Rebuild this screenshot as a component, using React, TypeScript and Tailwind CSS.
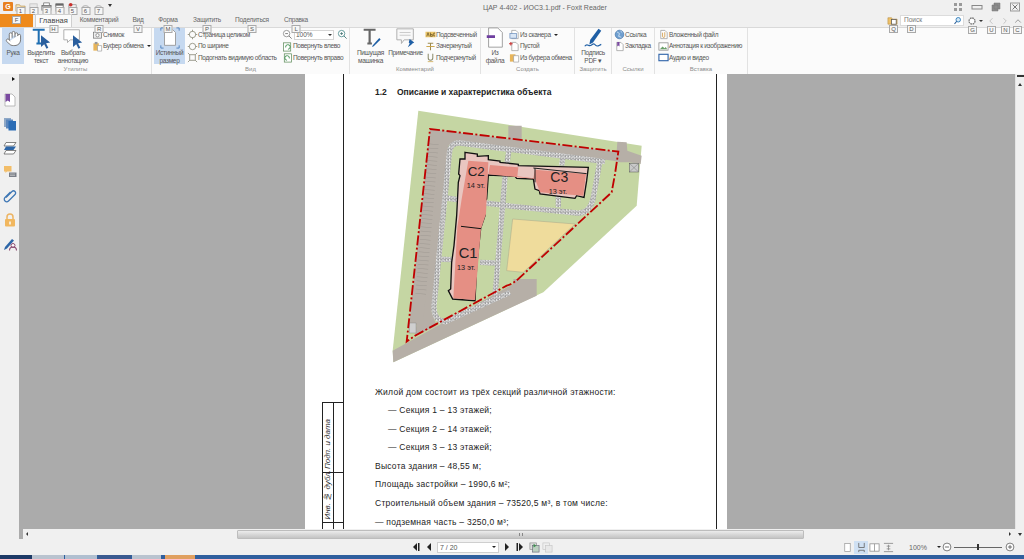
import type { ReactNode } from "react";
import { Hand, ChevronLeft, ChevronRight, ChevronUp } from "lucide-react";

function S({ children, className = "h-[11px] w-[11px]" }: { children: ReactNode; className?: string }) {
  return (
    <svg viewBox="0 0 12 12" className={"shrink-0 " + className}>
      {children}
    </svg>
  );
}

function L({ children, className = "h-[22px] w-[22px]" }: { children: ReactNode; className?: string }) {
  return (
    <svg viewBox="0 0 24 24" className={"shrink-0 " + className}>
      {children}
    </svg>
  );
}

function KeyTip({ k, className = "top-full left-1/2 -translate-x-1/2 -mt-[2px]" }: { k: string; className?: string }) {
  return (
    <span className={"absolute z-10 flex h-[8px] w-[9px] items-center justify-center border border-[#a9a9a9] bg-[#f6f6f6] text-[6px] leading-none text-[#555] " + className}>
      {k}
    </span>
  );
}

function Doc({ fill = "#fff" }: { fill?: string }) {
  return <path d="M3 1.5h4.5L10 4v6.5H3z" fill={fill} stroke="#999" strokeWidth=".8" />;
}

function Big({ icon, lines, active, w }: { icon: ReactNode; lines: string[]; active?: boolean; w: string }) {
  return (
    <div className={"flex h-[36px] flex-col items-center " + w + (active ? " bg-[#c6d9f0]" : "")}>
      <div className="flex h-[20px] items-center justify-center">{icon}</div>
      <div className="mt-[1px] text-center text-[6.5px] leading-[8px] tracking-[-0.3px] text-[#555]">
        {lines.map((l) => (
          <div key={l} className="whitespace-nowrap">
            {l}
          </div>
        ))}
      </div>
    </div>
  );
}

function Small({ icon, label, caret }: { icon: ReactNode; label: string; caret?: boolean }) {
  return (
    <div className="flex h-[11.5px] items-center whitespace-nowrap text-[6.5px] leading-none tracking-[-0.3px] text-[#555]">
      {icon}
      <span>{label}</span>
      {caret && <span className="ml-[3px] h-0 w-0 border-x-[2px] border-t-[2px] border-x-transparent border-t-[#222]" />}
    </div>
  );
}

function Group({ label, w, children }: { label: string; w: string; children: ReactNode }) {
  return (
    <div className={"flex h-full shrink-0 flex-col border-r border-[#e2e2e2] " + w}>
      <div className="flex h-[37px] items-start">{children}</div>
      <div className="text-center text-[6px] leading-[9px] text-[#8c8c8c]">{label}</div>
    </div>
  );
}

const SnapIcon = (
  <S>
    <rect x="1.5" y="3.5" width="9" height="6.5" fill="#eee" stroke="#777" strokeWidth=".8" />
    <circle cx="6" cy="6.8" r="1.8" fill="#fff" stroke="#777" strokeWidth=".8" />
  </S>
);
const ClipIcon = (
  <S>
    <rect x="1.5" y="2.5" width="6" height="8" fill="#e8b55a" />
    <rect x="3" y="1" width="3" height="2.5" fill="#999" />
    <path d="M6 5h4.5v6H6z" fill="#fff" stroke="#999" strokeWidth=".7" />
  </S>
);
const fitStroke = { fill: "none", stroke: "#8a8a7a", strokeWidth: 0.9 };
const FitPage = (
  <S>
    <circle cx="6" cy="6" r="3.5" {...fitStroke} />
    <path d="M6 .8v2M6 9.2v2M.8 6h2M9.2 6h2" {...fitStroke} />
  </S>
);
const FitWidth = (
  <S>
    <circle cx="6" cy="6" r="3.5" {...fitStroke} />
    <path d="M.8 6h2M9.2 6h2" {...fitStroke} />
  </S>
);
const FitVisible = (
  <S>
    <rect x="3" y="3" width="6" height="6" {...fitStroke} />
    <path d="M1 1l2 2M11 1L9 3M1 11l2-2M11 11L9 9" {...fitStroke} />
  </S>
);
const RotateL = (
  <S>
    <rect x="1.5" y="2" width="8" height="9" fill="#fff" stroke="#5d8c5a" strokeWidth=".8" />
    <path d="M4 7a2.5 2.5 0 1 1 2.5 2" fill="none" stroke="#3f8f50" strokeWidth="1" />
  </S>
);
const RotateR = (
  <S>
    <rect x="2.5" y="2" width="8" height="9" fill="#fff" stroke="#5d8c5a" strokeWidth=".8" />
    <path d="M8 7a2.5 2.5 0 1 0-2.5 2" fill="none" stroke="#3f8f50" strokeWidth="1" />
  </S>
);
const Highlight = (
  <S>
    <rect x="0.5" y="3" width="11" height="6" fill="#e9c46a" />
    <path d="M2 8l1.3-4L4.6 8M6 4v4M6 6h2v2H6M11 4.5H9.5v3H11" fill="none" stroke="#5a4a20" strokeWidth=".7" />
  </S>
);
const Strike = (
  <S>
    <path d="M3 2.5h6M6 2.5V10" fill="none" stroke="#9c8a50" strokeWidth="1.1" />
    <path d="M1.5 6h9" stroke="#c8a040" strokeWidth="1" />
  </S>
);
const Under = (
  <S>
    <path d="M3.5 2v4.5a2.5 2.5 0 0 0 5 0V2" fill="none" stroke="#8a8a6a" strokeWidth="1.1" />
    <path d="M3 10.5h6" stroke="#c8a040" strokeWidth=".8" />
  </S>
);
const Scan = (
  <S>
    <Doc />
    <rect x="1" y="5" width="7" height="5" fill="#d9e6f5" stroke="#5b82b5" strokeWidth=".7" />
  </S>
);
const Blank = (
  <S>
    <Doc />
    <path d="M2 1v4M0 3h4" stroke="#cc3333" strokeWidth="1.1" />
  </S>
);
const FromClip = (
  <S>
    <rect x="1" y="2.5" width="6" height="8" fill="#e8b55a" />
    <path d="M5 4h5.5v7H5z" fill="#fff" stroke="#999" strokeWidth=".7" />
  </S>
);
const Globe = (
  <S>
    <circle cx="6" cy="6" r="4.7" fill="#6f9fd0" stroke="#3e6fa5" strokeWidth=".7" />
    <path d="M3 3l3 2-1 3 3 1M7 2l2 2" fill="none" stroke="#d8e8f5" strokeWidth=".9" />
  </S>
);
const Bookmark = (
  <S>
    <Doc />
    <path d="M3.5 1h2.5v5L4.75 5 3.5 6z" fill="#7a4aa0" />
  </S>
);
const Attach = (
  <S>
    <Doc />
    <path d="M5 4v4a1.2 1.2 0 0 0 2.4 0V3.5" fill="none" stroke="#c98a2a" strokeWidth=".8" />
  </S>
);
const ImgNote = (
  <S>
    <rect x="1" y="2" width="10" height="8" fill="#fff" stroke="#888" strokeWidth=".8" />
    <path d="M2 9l3-3 2 2 1.5-1.5L10 9z" fill="#6aa06a" />
  </S>
);
const AV = (
  <S>
    <rect x="1" y="2.5" width="10" height="7" fill="#fff" stroke="#2d62a8" strokeWidth="1.2" />
  </S>
);

const cursorBlue = "M12 9l10 8-4.5.7 2.5 5-2 1-2.5-5-3.5 3z";

const tabs = [
  { t: "Комментарий", k: "R", w: "w-[54px]" },
  { t: "Вид", k: "V", w: "w-[24px]" },
  { t: "Форма", k: "M", w: "w-[36px]" },
  { t: "Защитить", k: "P", w: "w-[42px]" },
  { t: "Поделиться", k: "S", w: "w-[48px]" },
  { t: "Справка", k: "L", w: "w-[40px]" },
];

function QatIcon({ n, kind }: { n: string; kind: number }) {
  const faded = kind === 2 || kind === 6 || kind === 7;
  return (
    <div className="relative flex h-[14px] w-[13px] justify-center pt-[2px]">
      <svg viewBox="0 0 12 12" className={"h-[11px] w-[11px]" + (faded ? " opacity-40" : "")}>
        {kind === 1 && <path d="M1 3h4l1 1.5h5V10H1z" fill="#f7e3b5" stroke="#b58a3c" strokeWidth=".7" />}
        {kind === 2 && <rect x="2" y="2" width="8" height="8" fill="#ddd" stroke="#777" strokeWidth=".8" />}
        {kind === 3 && (
          <g>
            <rect x="1" y="4" width="10" height="5" fill="#aaa" stroke="#555" strokeWidth=".7" />
            <rect x="3" y="1" width="6" height="3" fill="#fff" stroke="#555" strokeWidth=".7" />
          </g>
        )}
        {kind === 4 && (
          <g>
            <rect x="2" y="2" width="8" height="8" fill="#fff" stroke="#555" strokeWidth=".8" />
            <rect x="2" y="2" width="8" height="2" fill="#666" />
          </g>
        )}
        {kind === 5 && (
          <g>
            <rect x="2" y="3" width="8" height="7" fill="#eee" stroke="#888" strokeWidth=".7" />
            <circle cx="4" cy="3" r="2" fill="#c9302c" />
          </g>
        )}
        {(kind === 6 || kind === 7) && (
          <path d={kind === 6 ? "M2 8a4 4 0 1 1 8 0" : "M2 8a4 4 0 0 1 8 0"} fill="none" stroke="#777" strokeWidth="1.2" />
        )}
      </svg>
      <KeyTip k={n} className="bottom-0 left-1/2 -translate-x-1/2 translate-y-[1px]" />
    </div>
  );
}

function SitePlan() {
  return (
    <svg viewBox="0 0 810 825" className="h-[275px] w-[270px]">
      <defs>
        <pattern id="pave" width="10" height="10" patternUnits="userSpaceOnUse">
          <rect width="10" height="10" fill="#f4f4f4" />
          <path d="M0 2h5M6 0v5M2 5v5M5 8h5" stroke="#858585" strokeWidth="2.4" />
        </pattern>
      </defs>
      <path d="M115 35L785 140 770 320 490 580 40 790 38 755z" fill="#c5d6a3" />
      <g fill="#b6afa7">
        <path d="M152 90L385 120 385 80 425 80 425 125 710 158 712 128 740 130 742 155 785 170 782 195 745 190 720 190 700 185 225 125 205 140 155 640 170 680 105 712 120 590 100 580z" />
        <path d="M38 755L400 555 400 540 470 540 470 590 40 790z" />
        <path d="M150 90L190 100 130 660 85 700z" />
      </g>
      <path d="M160 135L122 585" stroke="#a09a93" strokeWidth="32" strokeDasharray="1.5 11" fill="none" />
      <rect x="748" y="193" width="28" height="26" fill="#c9c9c9" stroke="#555" strokeWidth="1.5" />
      <path d="M748 193l28 26M776 193l-28 26" stroke="#555" strokeWidth="1" />
      <rect x="88" y="672" width="20" height="30" fill="#cfcfcf" stroke="#777" />
      <path d="M398 360L585 375 430 520 380 515z" fill="#efdc9c" stroke="#a9a68a" strokeWidth="1.5" />
      <g fill="none" stroke="url(#pave)" strokeWidth="16">
        <path d="M675 188L240 132Q210 130 208 165L162 620Q160 665 195 668L390 580" />
        <path d="M660 185L640 295Q630 345 590 342L380 320" />
        <path d="M388 145L375 235 345 590" />
        <path d="M200 297L240 303M315 312L380 320M170 480L215 482M300 490L345 492M550 165L545 200M535 285L535 325" />
      </g>
      <path
        d="M255 160L292 165 292 172 325 170 325 182 360 186 360 190 415 196 415 200 625 205 620 245 612 295 590 290 585 298 480 285 478 275 465 270 460 240 410 238 405 232 325 228 320 300 312 310 315 350 302 388 290 500 285 605 218 600 205 575 212 570 215 490 222 440 230 350 235 250 240 230 236 225 240 180 255 180z"
        fill="#e9c6c0"
        stroke="#111"
        strokeWidth="4"
      />
      <path d="M265 185L325 190 318 345 303 390 285 603 220 598 232 385 245 300z" fill="#e58f84" />
      <path d="M330 198L415 205 412 232 460 238 465 212 618 225 610 290 480 280 465 240 325 226z" fill="#e58f84" />
      <path d="M243 382L303 389" stroke="#111" strokeWidth="3" />
      <path d="M460 207L620 224M465 207L465 250" stroke="#222" strokeWidth="3" fill="none" />
      <path d="M150 90L715 158 705 225 695 280 420 535Q400 555 380 560L105 710 80 728z" fill="none" stroke="#c00000" strokeWidth="5.5" strokeDasharray="30 7 6 7" />
      <g fontFamily="'Liberation Sans', sans-serif" fill="#222">
        <text x="263" y="230" fontSize="40">С2</text>
        <text x="260" y="266" fontSize="22">14 эт.</text>
        <text x="236" y="477" fontSize="44">С1</text>
        <text x="231" y="512" fontSize="22">13 эт.</text>
        <text x="511" y="250" fontSize="42">С3</text>
        <text x="506" y="284" fontSize="22">13 эт.</text>
      </g>
    </svg>
  );
}

const docLines = [
  { t: "Жилой дом состоит из трёх секций различной этажности:", c: "" },
  { t: "—  Секция 1 – 13 этажей;", c: "pl-[13px]" },
  { t: "—  Секция 2 – 14 этажей;", c: "pl-[13px]" },
  { t: "—  Секция 3 – 13 этажей;", c: "pl-[13px]" },
  { t: "Высота здания – 48,55 м;", c: "" },
  { t: "Площадь застройки – 1990,6 м²;", c: "" },
  { t: "Строительный объем здания – 73520,5 м³, в том числе:", c: "" },
  { t: "— подземная часть – 3250,0 м³;", c: "" },
];

function Page() {
  return (
    <div className="ml-[286px] flex h-full w-[422px] overflow-hidden bg-white">
      <div className="flex w-[38px] shrink-0 flex-col justify-end pl-[17px]">
        <div className="flex h-[127px] flex-col border-t border-l border-[#222] text-[8px] italic text-[#333]">
          <div className="flex h-[70px] border-b border-[#222]">
            <div className="flex w-[11px] items-end justify-center border-r border-[#222] pb-[3px]">
              <span className="rotate-180 whitespace-nowrap leading-none [writing-mode:vertical-rl]">Подп. и дата</span>
            </div>
          </div>
          <div className="flex h-[50px] border-b border-[#222]">
            <div className="flex w-[11px] items-end justify-center border-r border-[#222] pb-[2px]">
              <span className="rotate-180 whitespace-nowrap leading-none [writing-mode:vertical-rl]">Инв. № дубл.</span>
            </div>
          </div>
          <div className="flex flex-1">
            <div className="w-[11px] border-r border-[#222]" />
          </div>
        </div>
      </div>
      <div className="flex w-[374px] shrink-0 flex-col border-x border-[#222] pl-[31px] font-['Liberation_Sans',sans-serif] text-[#222]">
        <div className="mt-[14px] flex h-[10px] items-center text-[8.5px] font-bold leading-none">
          <span className="w-[22px]">1.2</span>
          <span>Описание и характеристика объекта</span>
        </div>
        <div className="mt-[2px] -ml-[26px]">
          <div className="ml-[31px]">
            <SitePlan />
          </div>
        </div>
        <div className="mt-[9px] flex flex-col">
          {docLines.map((l) => (
            <div key={l.t} className={"h-[18.6px] whitespace-nowrap text-[8.5px] leading-[18.6px] tracking-[0.25px] " + l.c}>
              {l.t}
            </div>
          ))}
        </div>
      </div>
    </div>
  );
}

export default function App() {
  return (
    <div className="flex h-[559px] w-[1024px] flex-col overflow-hidden bg-[#f0f0f0] font-['Liberation_Sans',sans-serif] text-[#555]">
      {/* title row */}
      <div className="flex h-[14px] shrink-0 items-start">
        <div className="ml-[3px] mt-[2px] flex h-[9px] w-[10px] items-center justify-center rounded-[1px] bg-[#e8801e] text-[7px] font-bold leading-none text-white">G</div>
        <div className="ml-[1px] flex">
          <QatIcon n="1" kind={1} />
          <QatIcon n="2" kind={2} />
          <QatIcon n="3" kind={3} />
          <QatIcon n="4" kind={4} />
          <QatIcon n="5" kind={5} />
          <QatIcon n="6" kind={6} />
          <QatIcon n="7" kind={7} />
        </div>
        <span className="ml-[3px] mt-[4px] h-0 w-0 border-x-[2px] border-t-[3px] border-x-transparent border-t-[#333]" />
        <div className="ml-[371px] mt-[3px] whitespace-nowrap text-[7px] leading-[9px] text-[#666]">ЦАР 4-402 - ИОС3.1.pdf - Foxit Reader</div>
        <div className="ml-auto mr-[3px] mt-[1px] flex items-center gap-[7px]">
          <S className="h-[12px] w-[12px]">
            <path d="M2 2h3v3H2zM7 2h3v3H7zM2 7h3v3H2zM7 7h3v3H7z" fill="#9a9a9a" />
          </S>
          <S className="h-[12px] w-[12px]">
            <rect x="1" y="4.5" width="10" height="3.5" fill="none" stroke="#888" strokeWidth="1" />
          </S>
          <S className="h-[12px] w-[12px]">
            <path d="M4 2h6v6H4zM2 4h6v6H2z" fill="#8d8d8d" stroke="#777" strokeWidth=".5" />
          </S>
          <S className="h-[12px] w-[12px]">
            <rect x="1.5" y="2" width="9" height="8" fill="none" stroke="#999" strokeWidth="1" />
            <path d="M3.5 3.5l5 5M8.5 3.5l-5 5" stroke="#777" strokeWidth="1" />
          </S>
        </div>
      </div>

      {/* tabs row */}
      <div className="relative z-10 flex h-[13px] shrink-0 items-stretch">
        <div className="relative flex w-[33px] items-center justify-center bg-[#ee8a1c] text-white">
          <KeyTip k="F" className="left-[12px] top-[2px]" />
        </div>
        <div className="relative ml-[2px] flex w-[37px] items-center justify-center border-x border-t border-[#cfcfcf] bg-[#fbfbfb] text-[7.5px] leading-none text-[#444]">
          Главная
          <KeyTip k="H" />
        </div>
        {tabs.map((t) => (
          <div key={t.k} className={"relative flex items-center justify-center text-[6.5px] leading-none tracking-[-0.2px] text-[#666] " + t.w}>
            {t.t}
            <KeyTip k={t.k} />
          </div>
        ))}
        <div className="ml-auto flex items-center pr-[2px]">
          <div className="relative">
            <S className="h-[11px] w-[11px]">
              <path d="M1 3h4l1 1.5h5V10H1z" fill="#eec26a" stroke="#b58a3c" strokeWidth=".6" />
              <rect x="5" y="5" width="5" height="5" fill="#fff" stroke="#555" strokeWidth=".8" />
            </S>
            <KeyTip k="Q" className="left-[2px] top-[10px]" />
          </div>
          <div className="relative ml-[2px] flex h-[11px] w-[64px] items-center justify-between border border-[#dcdcdc] bg-white pl-[3px] pr-[1px] text-[6.5px] leading-none text-[#777]">
            Поиск
            <S className="h-[9px] w-[9px]">
              <circle cx="7" cy="5" r="3" fill="#d6e9f7" stroke="#2d79b8" strokeWidth="1.2" />
              <path d="M5 7L2 10.5" stroke="#2d5f98" strokeWidth="1.4" />
            </S>
            <KeyTip k="D" className="left-[6px] top-[9px]" />
          </div>
          <div className="relative ml-[3px]">
            <S className="h-[10px] w-[10px]">
              <circle cx="6" cy="6" r="3.6" fill="#fff" stroke="#777" strokeWidth="1.6" strokeDasharray="2 .8" />
            </S>
            <KeyTip k="G" className="left-[1px] top-[10px]" />
          </div>
          <span className="ml-[2px] mr-[3px] h-0 w-0 border-x-[2px] border-t-[2px] border-x-transparent border-t-[#333]" />
          <div className="relative w-[14px]">
            <ChevronLeft className="h-[10px] w-[10px] text-[#bbb]" />
            <KeyTip k="U" className="left-[1px] top-[10px]" />
          </div>
          <div className="relative w-[13px]">
            <ChevronRight className="h-[10px] w-[10px] text-[#bbb]" />
            <KeyTip k="N" className="left-[1px] top-[10px]" />
          </div>
          <div className="relative w-[9px]">
            <ChevronUp className="h-[10px] w-[10px] text-[#888]" />
            <KeyTip k="C" className="left-0 top-[10px]" />
          </div>
        </div>
      </div>

      {/* ribbon */}
      <div className="flex h-[47px] shrink-0 items-stretch border-t border-[#d9d9d9] bg-[#fbfbfb]">
        <Group label="Утилиты" w="w-[152px]">
          <div className="ml-[2px] flex">
            <Big
              w="w-[22px]"
              active
              lines={["Рука"]}
              icon={<Hand className="h-[17px] w-[17px] fill-white text-[#777]" strokeWidth={1.4} />}
            />
            <Big
              w="w-[34px]"
              lines={["Выделить", "текст"]}
              icon={
                <L>
                  <path d="M3 3h13M9.5 3v15M7 18h5" fill="none" stroke="#1f6fb2" strokeWidth="2.2" />
                  <path d={cursorBlue} fill="#2a5f9e" />
                </L>
              }
            />
            <Big
              w="w-[30px]"
              lines={["Выбрать", "аннотацию"]}
              icon={
                <L>
                  <path d="M2 3h17v11H9l-3 3v-3H2z" fill="#fff" stroke="#aaa" strokeWidth="1" />
                  <path d={cursorBlue} fill="#2a5f9e" />
                </L>
              }
            />
          </div>
          <div className="ml-[4px] mt-[1px] flex flex-col">
            <Small icon={SnapIcon} label="Снимок" />
            <Small icon={ClipIcon} label="Буфер обмена" caret />
          </div>
        </Group>

        <Group label="Вид" w="w-[198px]">
          <div className="ml-[2px]">
            <Big
              w="w-[31px]"
              active
              lines={["Истинный", "размер"]}
              icon={
                <L>
                  <path d="M6 2h8l4 4v14H6z" fill="#fff" stroke="#999" strokeWidth="1" />
                  <path d="M2 4V1h3M22 4V1h-3M2 20v3h3M22 20v3h-3" fill="none" stroke="#4f81bd" strokeWidth="1" />
                </L>
              }
            />
          </div>
          <div className="ml-[2px] mt-[1px] flex w-[95px] shrink-0 flex-col">
            <Small icon={FitPage} label="Страница целиком" />
            <Small icon={FitWidth} label="По ширине" />
            <Small icon={FitVisible} label="Подогнать видимую область" />
          </div>
          <div className="mt-[1px] flex flex-col">
            <div className="flex h-[11.5px] items-center gap-[1px]">
              <S>
                <circle cx="5" cy="5" r="3.5" fill="#fff" stroke="#888" strokeWidth=".9" />
                <path d="M3.5 5h3M7.5 7.5l3 3" stroke="#777" strokeWidth="1" />
              </S>
              <div className="flex h-[10px] w-[40px] items-center justify-between border border-[#d5d5d5] bg-white px-[1px] text-[6.5px] leading-none text-[#555]">
                100%
                <span className="h-0 w-0 border-x-[2px] border-t-[2px] border-x-transparent border-t-[#333]" />
              </div>
              <S className="ml-[2px] h-[11px] w-[11px]">
                <circle cx="5" cy="5" r="3.5" fill="#fff" stroke="#4a8a8a" strokeWidth=".9" />
                <path d="M3.5 5h3M5 3.5v3M7.5 7.5l3 3" stroke="#4a7a7a" strokeWidth="1" />
              </S>
            </div>
            <Small icon={RotateL} label="Повернуть влево" />
            <Small icon={RotateR} label="Повернуть вправо" />
          </div>
        </Group>

        <Group label="Комментарий" w="w-[131px]">
          <div className="ml-[3px] flex">
            <Big
              w="w-[35px]"
              lines={["Пишущая", "машинка"]}
              icon={
                <L>
                  <path d="M4 3h13M10.5 3v15M8 18h5" fill="none" stroke="#666" strokeWidth="2.4" />
                  <path d="M14 20l7-8 1.5 1.5-7.5 7.5-2 .7z" fill="#1f5fa5" />
                </L>
              }
            />
            <Big
              w="w-[35px]"
              lines={["Примечание"]}
              icon={
                <L>
                  <path d="M2 2h18v12H10l-3 4v-4H2z" fill="#f8f8f8" stroke="#aaa" strokeWidth="1" />
                  <path d="M5 6h12M5 9h12" stroke="#ccc" strokeWidth="1.2" />
                  <path d="M16 13l5 4-2 1-1 1-1 1-3 2 2-4-1-1z" fill="#1f5fa5" />
                </L>
              }
            />
          </div>
          <div className="ml-[2px] mt-[1px] flex flex-col">
            <Small icon={Highlight} label="Подсвеченный" />
            <Small icon={Strike} label="Зачеркнутый" />
            <Small icon={Under} label="Подчеркнутый" />
          </div>
        </Group>

        <Group label="Создать" w="w-[94px]">
          <div className="ml-[3px]">
            <Big
              w="w-[22px]"
              lines={["Из", "файла"]}
              icon={
                <L>
                  <path d="M5 1h10l5 5v16H5z" fill="#fff" stroke="#999" strokeWidth="1" />
                  <rect x="3" y="9" width="9" height="3" fill="#6f3fa0" />
                </L>
              }
            />
          </div>
          <div className="ml-[3px] mt-[1px] flex flex-col">
            <Small icon={Scan} label="Из сканера" caret />
            <Small icon={Blank} label="Пустой" />
            <Small icon={FromClip} label="Из буфера обмена" />
          </div>
        </Group>

        <Group label="Защитить" w="w-[37px]">
          <Big
            w="w-[36px]"
            lines={["Подпись", "PDF ▾"]}
            icon={
              <L>
                <path d="M9 14L18 2l3 2-9 13-4 2z" fill="#1f5fa5" />
                <path d="M3 21c3-4 4 1 7-1s3-2 5 0 3 0 6-1" fill="none" stroke="#1f5fa5" strokeWidth="1.3" />
              </L>
            }
          />
        </Group>

        <Group label="Ссылки" w="w-[43px]">
          <div className="ml-[2px] mt-[1px] flex flex-col">
            <Small icon={Globe} label="Ссылка" />
            <Small icon={Bookmark} label="Закладка" />
          </div>
        </Group>

        <Group label="Вставка" w="w-[93px]">
          <div className="ml-[3px] mt-[1px] flex flex-col">
            <Small icon={Attach} label="Вложенный файл" />
            <Small icon={ImgNote} label="Аннотация к изображению" />
            <Small icon={AV} label="Аудио и видео" />
          </div>
        </Group>
      </div>

      {/* document area */}
      <div className="flex h-[455px] shrink-0 items-stretch">
        <div className="relative flex w-[19px] shrink-0 flex-col items-center gap-[10px] pl-[1px] pt-[19px]">
          <span className="absolute left-[12px] top-[3px] h-0 w-0 border-y-[2px] border-l-[3px] border-y-transparent border-l-[#111]" />
          <svg viewBox="0 0 14 14" className="h-[14px] w-[14px]">
            <path d="M2 1h7l3 3v9H2z" fill="#fff" stroke="#aaa" strokeWidth=".8" />
            <path d="M2.5 1h4.5v8L4.75 7.5 2.5 9z" fill="#7a4aa0" />
          </svg>
          <svg viewBox="0 0 14 14" className="h-[14px] w-[14px]">
            <rect x="1" y="1" width="7" height="9" fill="#8fa8c6" />
            <rect x="3" y="2.5" width="7" height="9" fill="#5a86bd" />
            <rect x="5.5" y="4" width="7.5" height="9.5" fill="#2b6cb5" />
          </svg>
          <svg viewBox="0 0 14 14" className="h-[14px] w-[14px]">
            <path d="M3 1.5h10L10.5 5H1z" fill="#fff" stroke="#666" strokeWidth=".8" />
            <path d="M3 5.5h10L10.5 9H1z" fill="#2d66a8" />
            <path d="M3 9.5h10L10.5 13H1z" fill="#fff" stroke="#666" strokeWidth=".8" />
          </svg>
          <svg viewBox="0 0 14 14" className="h-[14px] w-[14px]">
            <path d="M1 1h7.5v5.5H4L2.5 8V6.5H1z" fill="#f2bd68" />
            <path d="M6 7.5h7.5V12H6z" fill="#7a7f88" />
            <path d="M7 9h5M7 10.5h5" stroke="#d4d4d4" strokeWidth=".6" />
          </svg>
          <svg viewBox="0 0 14 14" className="h-[14px] w-[14px]">
            <path d="M3 8.5L9 2.5a2 2 0 0 1 3 3L5.5 12a2.4 2.4 0 0 1-3.5-3.5L7.5 3" fill="none" stroke="#3f77b5" strokeWidth="1.3" />
          </svg>
          <svg viewBox="0 0 14 14" className="h-[14px] w-[14px]">
            <path d="M4 6V4a3 3 0 0 1 6 0v2" fill="none" stroke="#ecb463" strokeWidth="1.5" />
            <rect x="2" y="6" width="10" height="7.5" rx="1" fill="#f1b75f" />
            <rect x="6.3" y="8.5" width="1.4" height="3" fill="#fff" />
          </svg>
          <svg viewBox="0 0 14 14" className="h-[14px] w-[14px]">
            <path d="M1 13l1-3 7-8 2 1.5-7 8z" fill="#2d66a8" />
            <circle cx="10" cy="8.5" r="2" fill="#fff" stroke="#8b4a70" strokeWidth="1" />
            <path d="M6.5 13.5a3.5 3.5 0 0 1 7 0" fill="none" stroke="#8b4a70" strokeWidth="1.1" />
          </svg>
        </div>
        <div className="min-w-0 flex-1 bg-[#ababab]">
          <Page />
        </div>
        <div className="flex w-[9px] shrink-0 flex-col items-center border-l border-[#e4e4e4] pt-[1px] text-[6px] leading-none text-[#444]">
          <span className="h-[2px] w-[7px] bg-[#333]" />
          <span className="mt-[6px] h-0 w-0 border-x-[2px] border-b-[3px] border-x-transparent border-b-[#333]" />
        </div>
      </div>

      {/* horizontal scrollbar */}
      <div className="flex h-[10px] shrink-0 items-center">
        <div className="h-full w-[19px] shrink-0" />
        <div className="h-full w-[4px] shrink-0 bg-[#ababab]" />
        <span className="ml-[3px] h-0 w-0 border-y-[2px] border-r-[2px] border-y-transparent border-r-[#333]" />
        <div className="ml-[209px] flex h-[9px] w-[567px] items-center justify-center rounded-[1px] border border-[#bdbdbd] bg-linear-to-b from-[#ececec] to-[#c4c4c4]">
          <span className="h-[3px] w-[4px] border-x border-[#888]" />
        </div>
        <span className="ml-[205px] h-0 w-0 border-y-[2px] border-l-[2px] border-y-transparent border-l-[#333]" />
        <span className="ml-[7px] h-0 w-0 border-x-[2px] border-t-[3px] border-x-transparent border-t-[#333]" />
      </div>

      {/* status bar */}
      <div className="flex h-[16px] shrink-0 items-center">
        <div className="ml-[412px] flex items-center">
          <svg viewBox="0 0 8 8" className="h-[8px] w-[8px]">
            <path d="M5 0v8L1 4z" fill="#222" />
            <rect x="6" y="0" width="1.5" height="8" fill="#222" />
          </svg>
          <svg viewBox="0 0 8 8" className="ml-[5px] h-[8px] w-[8px]">
            <path d="M6 0v8L2 4z" fill="#222" />
          </svg>
          <div className="ml-[4px] flex h-[11px] w-[62px] items-center justify-between border border-[#cfcfcf] bg-white px-[2px] text-[7px] leading-none text-[#555]">
            7 / 20
            <span className="h-0 w-0 border-x-[2px] border-t-[2px] border-x-transparent border-t-[#222]" />
          </div>
          <svg viewBox="0 0 8 8" className="ml-[4px] h-[8px] w-[8px]">
            <path d="M2 0v8l4-4z" fill="#222" />
          </svg>
          <svg viewBox="0 0 8 8" className="ml-[5px] h-[8px] w-[8px]">
            <rect x=".5" y="0" width="1.5" height="8" fill="#222" />
            <path d="M3 0v8l4-4z" fill="#222" />
          </svg>
          <S className="ml-[5px] h-[11px] w-[11px]">
            <rect x="1" y="1" width="7" height="7" fill="#dcdcdc" stroke="#888" strokeWidth=".7" />
            <rect x="4" y="4" width="7" height="7" fill="#bcd0c0" stroke="#667" strokeWidth=".7" />
            <path d="M5 2l3 2-3 2z" fill="#3f8f50" />
          </S>
          <S className="ml-[2px] h-[11px] w-[11px] opacity-40">
            <rect x="1" y="1" width="7" height="7" fill="#eee" stroke="#888" strokeWidth=".7" />
            <rect x="4" y="4" width="7" height="7" fill="#ddd" stroke="#888" strokeWidth=".7" />
          </S>
        </div>
        <div className="ml-[289px] flex items-center">
          <S className="h-[11px] w-[11px]">
            <rect x="3" y="1.5" width="6" height="9" fill="#fff" stroke="#999" strokeWidth=".8" />
          </S>
          <div className="ml-[1px] flex h-[13px] w-[14px] items-center justify-center bg-[#cfe0f3]">
            <S className="h-[11px] w-[11px]">
              <path d="M3 1v5h6V1M3 11V9h6v2" fill="none" stroke="#666" strokeWidth=".9" />
            </S>
          </div>
          <S className="ml-[1px] h-[11px] w-[11px]">
            <rect x="1" y="2" width="10" height="8" fill="#fff" stroke="#888" strokeWidth=".8" />
            <path d="M6 2v8" stroke="#888" strokeWidth=".8" />
          </S>
          <S className="ml-[3px] h-[11px] w-[11px]">
            <path d="M1 1.5h10M1 10.5h10M6 3v6M4 4.5h4M4 7.5h4" fill="none" stroke="#888" strokeWidth=".9" />
          </S>
          <span className="ml-[15px] w-[24px] text-[7px] leading-none text-[#666]">100%</span>
          <span className="ml-[4px] h-0 w-0 border-x-[2px] border-t-[2px] border-x-transparent border-t-[#222]" />
          <S className="ml-[1px] h-[10px] w-[10px]">
            <circle cx="6" cy="6" r="4.7" fill="#fff" stroke="#555" strokeWidth=".9" />
            <path d="M3.5 6h5" stroke="#555" />
          </S>
          <div className="relative ml-[2px] flex h-[8px] w-[48px] items-center">
            <div className="h-px w-full bg-[#666]" />
            <span className="absolute left-[23px] top-[1px] h-[6px] w-[2px] bg-[#333]" />
          </div>
          <S className="ml-[3px] h-[10px] w-[10px]">
            <circle cx="6" cy="6" r="4.7" fill="#fff" stroke="#555" strokeWidth=".9" />
            <path d="M3.5 6h5M6 3.5v5" stroke="#555" />
          </S>
        </div>
      </div>

      {/* taskbar */}
      <div className="flex h-[4px] shrink-0 items-stretch bg-[#2f5f9e]">
        <div className="w-[32px] bg-[#1d3a66]" />
        <div className="w-[32px] bg-[#b9c3cf]" />
        <div className="ml-px w-[32px] bg-[#b0bfd0]" />
        <div className="ml-px w-[33px] bg-[#3a5a90]" />
        <div className="ml-px w-[29px] bg-[#b9c3cf]" />
        <div className="ml-[4px] w-[30px] bg-[#e0a060]" />
      </div>
    </div>
  );
}
